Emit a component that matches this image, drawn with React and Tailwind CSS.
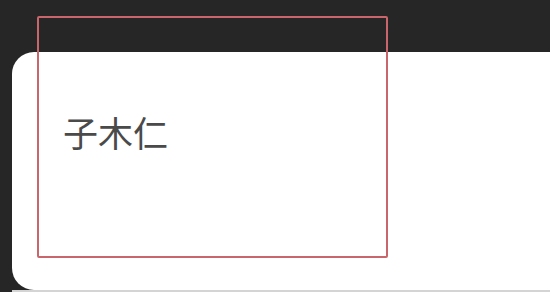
import React from "react";

const App = () => {
    return (
        <div className="relative w-[550px] h-[292px] bg-[#262626] pt-[52px] pl-[12px] overflow-hidden">
            <div className="h-[238px] bg-white rounded-l-[22px] pl-[51px] pt-[60px]">
                <p
                    className="text-[35px] leading-[40px] text-[#4a4a4a]"
                    style={{ fontFamily: '"Noto Sans CJK SC", sans-serif' }}
                >
                    子木仁
                </p>
            </div>
            <div className="h-[2px] bg-[#d4d4d4]" />
            <div className="absolute left-[37px] top-[16px] w-[351px] h-[242px] border-2 border-[#c9666b] rounded-[2px]" />
        </div>
    );
};

export default App;
